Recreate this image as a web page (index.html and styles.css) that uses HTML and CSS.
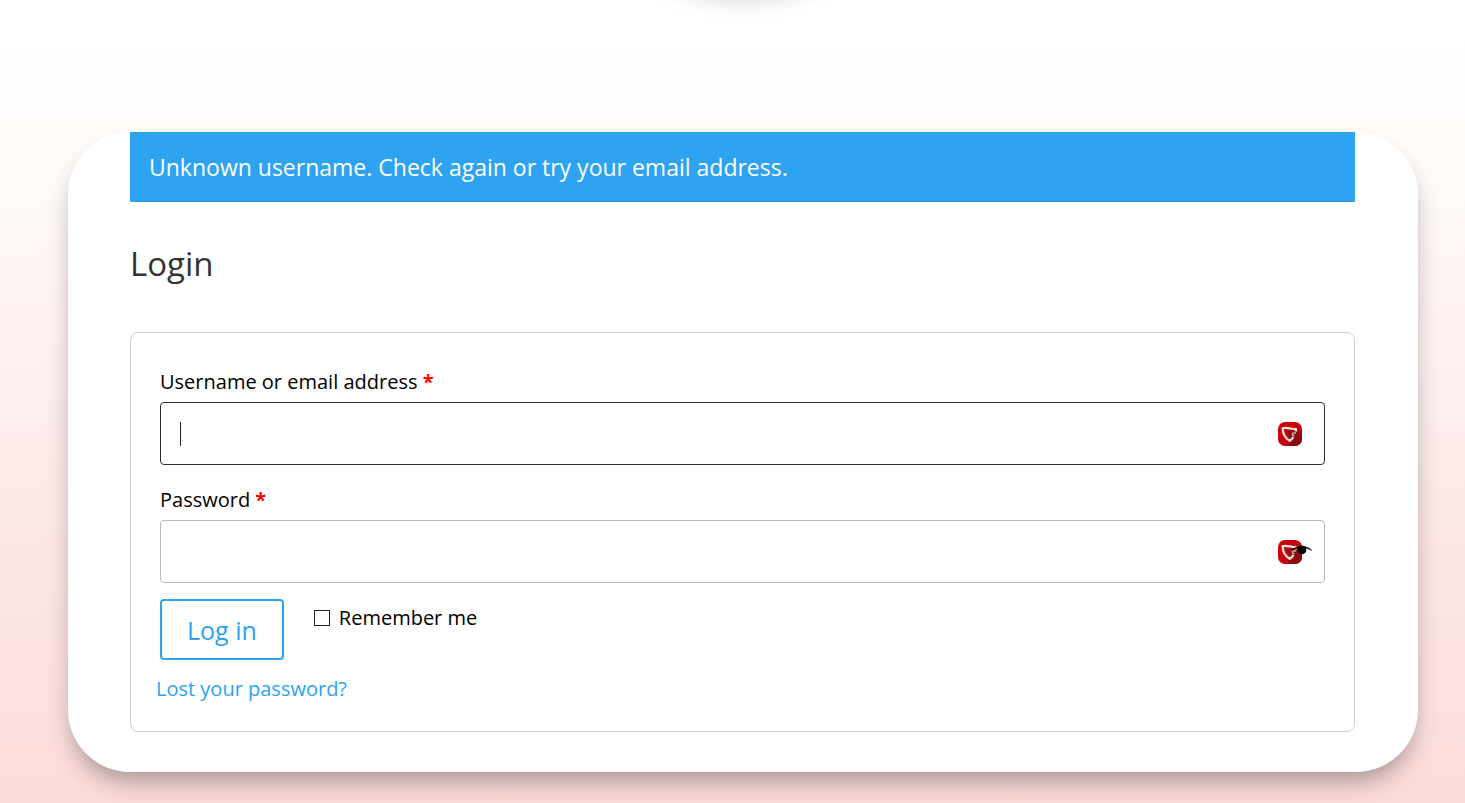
FILE: index.html
```html
<!DOCTYPE html>
<html lang="en">
<head>
<meta charset="utf-8">
<meta name="viewport" content="width=device-width, initial-scale=1">
<title>Login</title>
<link rel="stylesheet" href="styles.css">
</head>
<body>
<svg class="defs" aria-hidden="true">
  <defs>
    <linearGradient id="badge" x1="0" y1="0" x2="1" y2="1">
      <stop offset="0" stop-color="#d0060f"/><stop offset="1" stop-color="#b8050d"/>
    </linearGradient>
    <symbol id="vault" viewBox="0 0 24 24">
      <clipPath id="round"><rect width="24" height="24" rx="7"/></clipPath>
      <g clip-path="url(#round)">
        <rect width="24" height="24" fill="url(#badge)"/>
        <path d="M18 8 30 18v12H16l-6-7 2-4z" fill="#8a0c10"/>
        <path d="M8 8.500 17 8l-2 7-3 3z" fill="#8f1014"/>
        <path d="M18 9.500V7C14 7.300 9 5 4.600 6.200c.2 5.300 2.600 9.900 7.100 12.600 1.600-1 2.800-2.200 3.700-3.800" fill="none" stroke="#f7e4e4" stroke-width="2.200" stroke-linejoin="round"/>
        <path d="M14.500 11h3.500M14.500 11v2.500h2" fill="none" stroke="#d9a0a2" stroke-width="1.300"/>
      </g>
    </symbol>
  </defs>
</svg>
<header class="top"><div class="logo"></div></header>
<main class="page">
  <section class="card">
    <div class="notice" role="alert">Unknown username. Check again or try your email address.</div>
    <h2 class="title">Login</h2>
    <form class="login">
      <label class="label" for="username">Username or email address <span class="required">*</span></label>
      <div class="field">
        <input class="input input-active" id="username" name="username" type="text">
        <span class="caret"></span>
        <svg class="vault" aria-hidden="true"><use href="#vault"/></svg>
      </div>
      <label class="label" for="password">Password <span class="required">*</span></label>
      <div class="field">
        <input class="input" id="password" name="password" type="password">
        <svg class="vault" aria-hidden="true"><use href="#vault"/></svg>
        <button class="reveal" type="button" aria-label="Show password">
          <svg class="eye" viewBox="0 0 20 10" aria-hidden="true">
            <path d="M0 5C5-.2 14-.2 19.800 5.300 14 2.200 6 2 0 5z" fill="#000" stroke="#000" stroke-width=".6"/>
            <circle cx="10" cy="5" r="4.300" fill="#000"/>
          </svg>
        </button>
      </div>
      <div class="actions">
        <button class="submit" type="submit">Log in</button>
        <label class="remember"><input class="check" type="checkbox" name="remember">Remember me</label>
      </div>
      <a class="lost" href="#">Lost your password?</a>
    </form>
  </section>
</main>
</body>
</html>
```
FILE: styles.css
```css
* {
  box-sizing: border-box;
}

body {
  margin: 0;
  min-height: 100vh;
  background: linear-gradient(#fff 0, #fff 5%, #fffaf7 24%, #fef1f0 42%, #fce6e4 70%, #fddfdf 90%, #fcdcd9 100%) no-repeat;
  color: #000;
  font: 20px/30px "Open Sans", "Noto Sans", sans-serif;
}

.defs {
  position: absolute;
  width: 0;
  height: 0;
}

.top {
  display: flex;
  justify-content: center;
  align-items: flex-start;
  height: 132px;
  padding-left: 20px;
  overflow: hidden;
}

.logo {
  width: 340px;
  height: 340px;
  margin-top: -351px;
  flex: none;
  border-radius: 50%;
  background: #fff;
  box-shadow: 0 12px 26px -6px rgba(0, 0, 0, 0.27);
}

.page {
  padding: 0 47px 31px 68px;
}

.card {
  padding: 0 63px 40px 62px;
  border-radius: 62px;
  background: #fff;
  box-shadow: 0 14px 26px -6px rgba(0, 0, 0, 0.36);
}

.notice {
  padding: 20px 19px;
  background: #2ea3f2;
  color: #fff;
  font-size: 23px;
}

.title {
  margin: 40px 0 46px;
  color: #333;
  font-size: 33px;
  font-weight: 400;
  line-height: 44px;
}

.login {
  padding: 34px 29px 27px;
  border: 1px solid #d0d0d0;
  border-radius: 8px;
}

.label {
  display: block;
  margin-bottom: 5px;
}

.required {
  color: #f00;
  font-weight: 700;
}

.field {
  position: relative;
  margin-bottom: 20px;
}

.input {
  display: block;
  width: 100%;
  height: 63px;
  padding: 0 20px;
  border: 1px solid #bbb;
  border-radius: 4px;
  background: #fff;
  color: #333;
  font: inherit;
}

.input-active {
  border-color: #24303a;
}

.caret {
  position: absolute;
  top: 20px;
  left: 20px;
  width: 1px;
  height: 24px;
  background: #222;
}

.vault {
  position: absolute;
  top: 20px;
  right: 23px;
  width: 24px;
  height: 24px;
}

.reveal {
  position: absolute;
  top: 25px;
  right: 13px;
  padding: 0;
  border: 0;
  background: none;
  line-height: 0;
}

.eye {
  width: 20px;
  height: 10px;
}

.actions {
  display: flex;
  align-items: flex-start;
  gap: 30px;
  margin-top: -4px;
}

.submit {
  padding: 8px 25px 6px;
  border: 2px solid #2ea3f2;
  border-radius: 4px;
  background: #fff;
  color: #2ea3f2;
  font: 25px/43px "Open Sans", "Noto Sans", sans-serif;
}

.remember {
  display: flex;
  align-items: center;
  gap: 9px;
  padding-top: 4px;
}

.check {
  appearance: none;
  width: 16px;
  height: 16px;
  margin: 0;
  border: 1px solid #222;
  background: #fff;
}

.lost {
  display: block;
  width: fit-content;
  margin: 14px 0 0 -4px;
  color: #2ea3f2;
  text-decoration: none;
}
```
